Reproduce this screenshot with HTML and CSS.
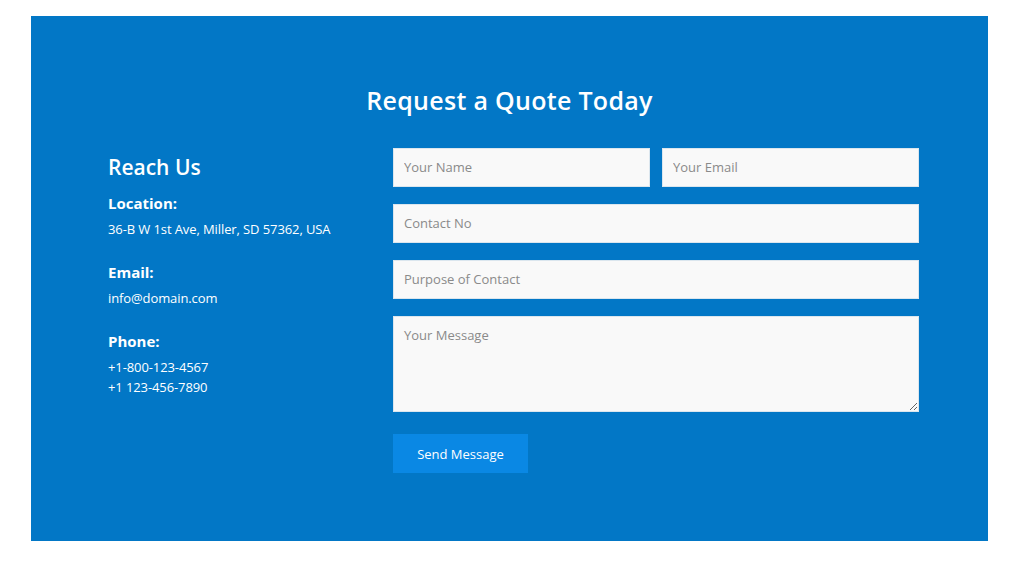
FILE: index.html
```html
<!DOCTYPE html>
<html lang="en">
<head>
<meta charset="utf-8">
<title>Request a Quote Today</title>
<link rel="stylesheet" href="styles.css">
</head>
<body>
<section class="quote">
  <h2 class="quote-title">Request a Quote Today</h2>
  <div class="quote-row">
    <div class="contact-info">
      <h3 class="info-title">Reach Us</h3>
      <h4 class="info-label">Location:</h4>
      <p class="info-text">36-B W 1st Ave, Miller, SD 57362, USA</p>
      <h4 class="info-label">Email:</h4>
      <p class="info-text">info@domain.com</p>
      <h4 class="info-label">Phone:</h4>
      <p class="info-text">+1-800-123-4567<br>+1 123-456-7890</p>
    </div>
    <form class="quote-form">
      <div class="form-pair">
        <input class="field" type="text" placeholder="Your Name">
        <input class="field" type="email" placeholder="Your Email">
      </div>
      <input class="field" type="text" placeholder="Contact No">
      <input class="field" type="text" placeholder="Purpose of Contact">
      <textarea class="field field-area" placeholder="Your Message"></textarea>
      <div class="form-actions">
        <button class="send-btn" type="button">Send Message</button>
      </div>
    </form>
  </div>
</section>
</body>
</html>
```
FILE: styles.css
```css
* { box-sizing: border-box; }

html, body {
  margin: 0;
  padding: 0;
  background: #ffffff;
}

body {
  font-family: "Open Sans", "Liberation Sans", sans-serif;
  color: #ffffff;
}

.quote {
  width: 957px;
  height: 525px;
  margin: 16px 0 0 31px;
  background: #0277c6;
  padding: 68px 69px 0 77px;
}

.quote-title {
  margin: 0 0 32px 0;
  padding-right: 8px;
  font-size: 25px;
  line-height: 32px;
  font-weight: 600;
  text-align: center;
  letter-spacing: 0.3px;
}

.quote-row {
  display: grid;
  grid-template-columns: 285px 526px;
}

.contact-info {
  padding-top: 6px;
}

.info-title {
  margin: 0 0 13px 0;
  font-size: 21px;
  line-height: 26px;
  font-weight: 600;
}

.info-label {
  margin: 0 0 6px 0;
  font-size: 15px;
  line-height: 20px;
  font-weight: 700;
}

.info-text {
  margin: 0 0 23px 0;
  font-size: 13px;
  line-height: 20px;
  font-weight: 400;
  letter-spacing: -0.1px;
}

.quote-form {
  display: flex;
  flex-direction: column;
  gap: 17px;
}

.form-pair {
  display: grid;
  grid-template-columns: 1fr 1fr;
  gap: 12px;
}

.field {
  display: block;
  width: 100%;
  height: 39px;
  margin: 0;
  padding: 0 10px 1px 10px;
  background: #f9f9f9;
  border: 1px solid #dbe6ee;
  border-radius: 0;
  font-family: "Open Sans", "Liberation Sans", sans-serif;
  font-size: 13px;
  color: #555;
  outline: none;
}

.field::placeholder {
  color: #8a8a8a;
}

.field-area {
  height: 96px;
  padding-top: 9px;
  resize: vertical;
}

.form-actions {
  padding-top: 5px;
}

.send-btn {
  width: 135px;
  height: 39px;
  border: none;
  border-radius: 0;
  background: #0a88e4;
  color: #ffffff;
  font-family: "Open Sans", "Liberation Sans", sans-serif;
  font-size: 13px;
  padding-bottom: 1px;
  cursor: pointer;
}
```
